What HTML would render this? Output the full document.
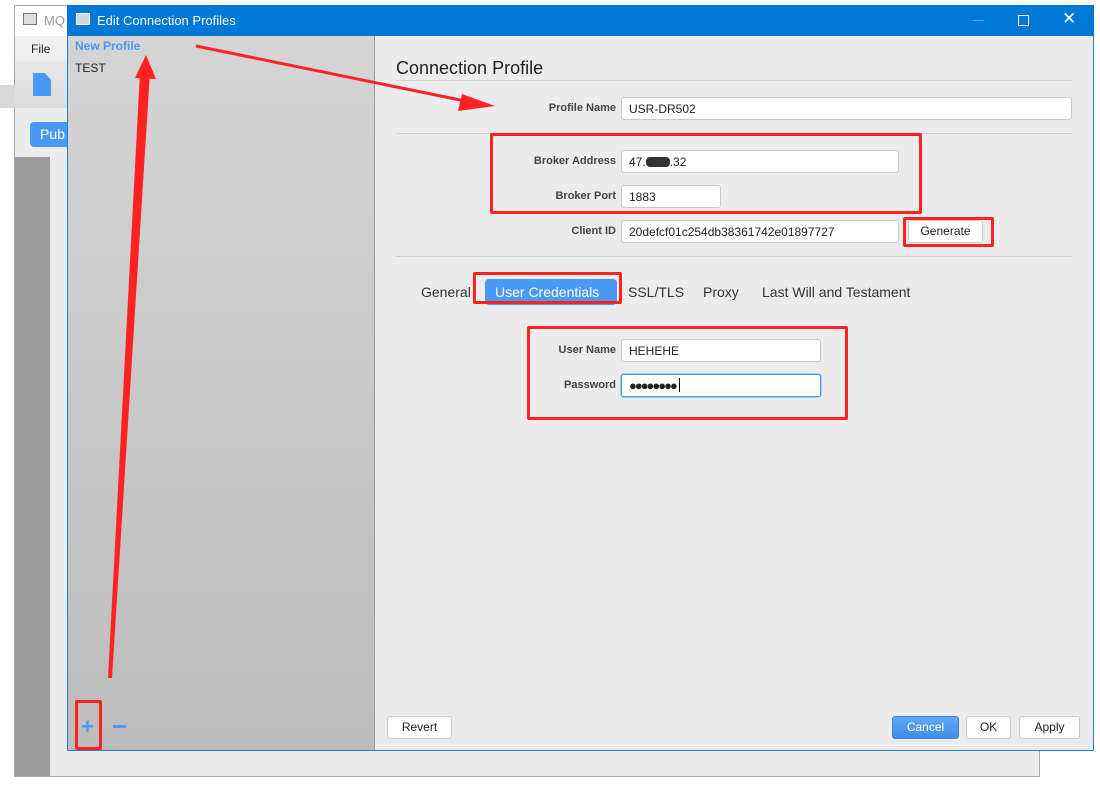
<!DOCTYPE html>
<html><head><meta charset="utf-8"><style>
*{box-sizing:border-box;margin:0;padding:0}
body{width:1100px;height:795px;background:#fff;position:relative;overflow:hidden;font-family:"Liberation Sans",sans-serif;font-size:12px;color:#222}
.abs{position:absolute}
.lbl{position:absolute;font-weight:bold;font-size:11px;color:#444;text-align:right;width:120px}
.inp{position:absolute;background:#fff;border:1px solid #c8c8c8;border-radius:3px;height:23px;padding:4px 7px;font-size:12px;color:#222}
.btn{position:absolute;background:#fff;border:1px solid #ccc;border-radius:3px;height:23px;font-size:12px;text-align:center;line-height:21px}
.red{position:absolute;border:3px solid #f22;border-radius:2px}
.tab{position:absolute;top:284px;font-size:14px;color:#333}
</style></head><body>
<div class="abs" style="left:14px;top:5px;width:1026px;height:772px;background:#ececec;border:1px solid #aaa"></div>
<div class="abs" style="left:15px;top:6px;width:1024px;height:30px;background:#fff"></div>
<div class="abs" style="left:23px;top:13px;width:14px;height:12px;border:1px solid #777;background:#ddd"></div>
<div class="abs" style="left:44px;top:13px;font-size:13px;color:#999">MQ</div>
<div class="abs" style="left:15px;top:36px;width:1024px;height:25px;background:#f0f0f0"></div>
<div class="abs" style="left:31px;top:42px;font-size:12px">File</div>
<div class="abs" style="left:15px;top:61px;width:1024px;height:47px;background:linear-gradient(#e8e8e8,#dcdcdc)"></div>
<div class="abs" style="left:0;top:85px;width:15px;height:23px;background:#d9d9d9"></div>
<div class="abs" style="left:33px;top:73px;width:18px;height:23px;background:#4a9af5;clip-path:polygon(0 0,65% 0,100% 30%,100% 100%,0 100%)"></div>
<div class="abs" style="left:30px;top:122px;width:40px;height:25px;background:#4a9af5;border-radius:4px;color:#fff;font-size:14px;padding:4px 10px">Pub</div>
<div class="abs" style="left:15px;top:157px;width:35px;height:619px;background:#9c9c9c"></div>
<div class="abs" style="left:67px;top:5px;width:1027px;height:746px;border:1px solid #1b7fd8;background:#ececec"></div>
<div class="abs" style="left:67px;top:5px;width:1027px;height:31px;background:#0078d7"></div>
<div class="abs" style="left:76px;top:13px;width:14px;height:12px;border:1px solid #fff;background:#cfd8e0"></div>
<div class="abs" style="left:97px;top:13px;font-size:13px;color:#fff">Edit Connection Profiles</div>
<div class="abs" style="left:973px;top:20px;width:11px;height:1px;background:#6aa7e0"></div>
<div class="abs" style="left:1018px;top:15px;width:11px;height:11px;border:1px solid #fff"></div>
<div class="abs" style="left:1062px;top:9px;color:#fff;font-size:17px">✕</div>
<div class="abs" style="left:68px;top:36px;width:307px;height:714px;background:linear-gradient(#d5d5d5,#bcbcbc);border-right:1px solid #999"></div>
<div class="abs" style="left:75px;top:39px;font-weight:bold;color:#4a9af5;font-size:12px">New Profile</div>
<div class="abs" style="left:75px;top:61px;font-size:12px">TEST</div>
<div class="abs" style="left:81px;top:714px;color:#4a9af5;font-size:22px;font-weight:bold">+</div>
<div class="abs" style="left:113px;top:725px;width:13px;height:3px;background:#4a9af5"></div>
<div class="abs" style="left:396px;top:58px;font-size:18px;color:#222">Connection Profile</div>
<div class="abs" style="left:396px;top:80px;width:676px;height:1px;background:#d0d0d0"></div>
<div class="lbl" style="left:496px;top:102px">Profile Name</div>
<div class="inp" style="left:621px;top:97px;width:451px">USR-DR502</div>
<div class="abs" style="left:396px;top:133px;width:676px;height:1px;background:#d0d0d0"></div>
<div class="lbl" style="left:496px;top:155px">Broker Address</div>
<div class="inp" style="left:621px;top:150px;width:278px">47.<span style="display:inline-block;width:24px;height:10px;background:#333;border-radius:4px;vertical-align:-1px"></span>.32</div>
<div class="lbl" style="left:496px;top:190px">Broker Port</div>
<div class="inp" style="left:621px;top:185px;width:100px">1883</div>
<div class="lbl" style="left:496px;top:225px">Client ID</div>
<div class="inp" style="left:621px;top:220px;width:278px">20defcf01c254db38361742e01897727</div>
<div class="btn" style="left:908px;top:220px;width:75px">Generate</div>
<div class="abs" style="left:396px;top:256px;width:676px;height:1px;background:#d0d0d0"></div>
<div class="tab" style="left:421px">General</div>
<div class="abs" style="left:485px;top:279px;width:132px;height:26px;background:#4a9af5;border-radius:4px"></div>
<div class="tab" style="left:495px;color:#fff">User Credentials</div>
<div class="tab" style="left:628px">SSL/TLS</div>
<div class="tab" style="left:703px">Proxy</div>
<div class="tab" style="left:762px">Last Will and Testament</div>
<div class="lbl" style="left:496px;top:344px">User Name</div>
<div class="inp" style="left:621px;top:339px;width:200px">HEHEHE</div>
<div class="lbl" style="left:496px;top:379px">Password</div>
<div class="inp" style="left:621px;top:374px;width:200px;border:1px solid #4a9af5;box-shadow:0 0 0 1px #9cc8f7;font-size:13px;letter-spacing:-2px;padding-top:3px">●●●●●●●●<span style="display:inline-block;width:1px;height:14px;background:#000;vertical-align:-2px;margin-left:3px"></span></div>
<div class="btn" style="left:387px;top:716px;width:65px">Revert</div>
<div class="btn" style="left:892px;top:716px;width:67px;background:linear-gradient(#62a8f5,#3f8ee6);color:#fff;border-color:#3a86dc">Cancel</div>
<div class="btn" style="left:966px;top:716px;width:45px">OK</div>
<div class="btn" style="left:1019px;top:716px;width:61px">Apply</div>
<div class="red" style="left:490px;top:133px;width:432px;height:81px"></div>
<div class="red" style="left:903px;top:217px;width:91px;height:30px"></div>
<div class="red" style="left:473px;top:272px;width:149px;height:32px"></div>
<div class="red" style="left:527px;top:326px;width:321px;height:94px"></div>
<div class="red" style="left:75px;top:700px;width:27px;height:50px"></div>
<svg class="abs" style="left:0;top:0" width="1100" height="795">
<line x1="196" y1="46" x2="470" y2="102" stroke="#f22" stroke-width="3"/>
<polygon points="495,106 462,94 458,111" fill="#f22"/>
<polygon points="108,678 140,72 150,72 112,678" fill="#f22"/>
<polygon points="146,55 135,78 156,79" fill="#f22"/>
</svg>
</body></html>
